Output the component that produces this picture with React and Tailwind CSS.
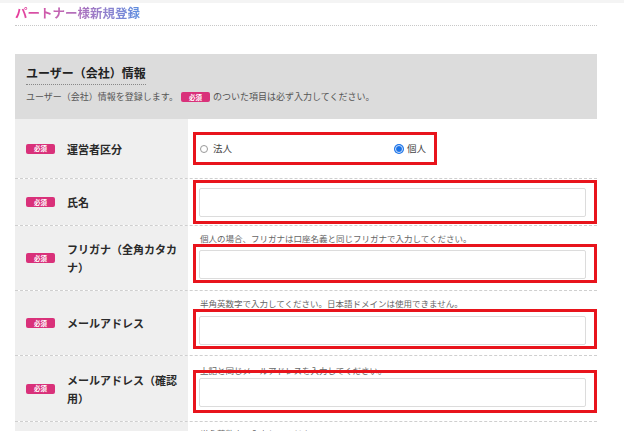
import React from 'react';

const Badge = () => (
  <span className="inline-flex items-center justify-center w-[29px] h-[10px] rounded-[2px] bg-[#d9317a] text-white text-[6.5px] font-bold leading-none align-middle">必須</span>
);

const RedBox = ({ className = '', children }) => (
  <div className={`border-[3px] border-[#e8141c] ${className}`}>{children}</div>
);

const TextInput = () => (
  <input type="text" className="block w-[387px] h-[29px] border border-[#dcdcdc] rounded-[2px] bg-white outline-none" />
);

const Row = ({ label, note, children, h }) => (
  <div className={`flex border-b border-dashed border-[#cfcfcf] ${h}`}>
    <div className="w-[173px] shrink-0 bg-[#efefef] flex items-center pl-[11px]">
      <Badge />
      <span className="ml-[12px] w-[114px] text-[11px] font-bold text-[#2a2a2a] leading-[18px]">{label}</span>
    </div>
    <div className="flex-1 bg-white pl-[5px] flex flex-col justify-center">
      {note && <p className="text-[8.5px] text-[#666] pl-[7px] leading-[10px] mb-[1px]">{note}</p>}
      {children}
    </div>
  </div>
);

export default function App() {
  return (
    <div className="w-[624px] h-[431px] overflow-hidden bg-white" style={{ fontFamily: '"Noto Sans CJK JP", "Noto Sans", sans-serif' }}>
      <div className="h-[3px] bg-[#f4f4f4]" />
      <div className="pl-[15px] w-[597px]">
        <h1 className="pt-[2px] text-[12.5px] font-bold leading-[16px] bg-gradient-to-r from-[#e8389a] to-[#5a8ee0] bg-clip-text text-transparent w-max">パートナー様新規登録</h1>
        <div className="mt-[4px] border-b border-dotted border-[#c8c8c8]" />

        <div className="mt-[28px] bg-[#dcdcdc] h-[65px] pl-[11px] pt-[11px]">
          <h2 className="text-[12px] font-bold text-[#222] leading-[16px] w-max pb-[3px] border-b border-dotted border-[#888]">ユーザー（会社）情報</h2>
          <p className="mt-[6px] text-[9px] text-[#555] leading-[12px] flex items-center gap-[3px]">
            ユーザー（会社）情報を登録します。<Badge />のついた項目は必ず入力してください。
          </p>
        </div>

        <Row label="運営者区分" h="h-[60px]">
          <RedBox className="w-[244px] h-[33px] flex items-center pl-[4px] pr-[8px] text-[9.5px] text-[#444]">
            <span className="flex items-center gap-[5px]">
              <span className="w-[8px] h-[8px] rounded-full border border-[#999]" />法人
            </span>
            <span className="ml-auto flex items-center gap-[4px]">
              <span className="w-[8px] h-[8px] rounded-full bg-[#1a73e8] border-[1.5px] border-[#cfe0fb] ring-1 ring-[#1a73e8]" />個人
            </span>
          </RedBox>
        </Row>

        <Row label="氏名" h="h-[47px]">
          <RedBox className="w-[404px] pl-[3px] pt-[5px] pb-[4px]">
            <TextInput />
          </RedBox>
        </Row>

        <Row label="フリガナ（全角カタカナ）" note="個人の場合、フリガナは口座名義と同じフリガナで入力してください。" h="h-[65px]">
          <RedBox className="w-[404px] pl-[3px] pt-[3px] pb-[1px]">
            <TextInput />
          </RedBox>
        </Row>

        <Row label="メールアドレス" note="半角英数字で入力してください。日本語ドメインは使用できません。" h="h-[65px]">
          <RedBox className="w-[404px] pl-[3px] pt-[4px] pb-[1px]">
            <TextInput />
          </RedBox>
        </Row>

        <Row label="メールアドレス（確認用）" note="上記と同じメールアドレスを入力してください。" h="h-[66px]">
          <RedBox className="-mt-[6px] w-[404px] pl-[3px] pt-[5px] pb-[3px]">
            <TextInput />
          </RedBox>
        </Row>
        <div className="flex h-[20px]">
          <div className="w-[173px] bg-[#efefef]" />
          <div className="flex-1 pl-[12px] pt-[5px] text-[8.5px] text-[#666]">半角英数字で入力してください。</div>
        </div>
      </div>
    </div>
  );
}
